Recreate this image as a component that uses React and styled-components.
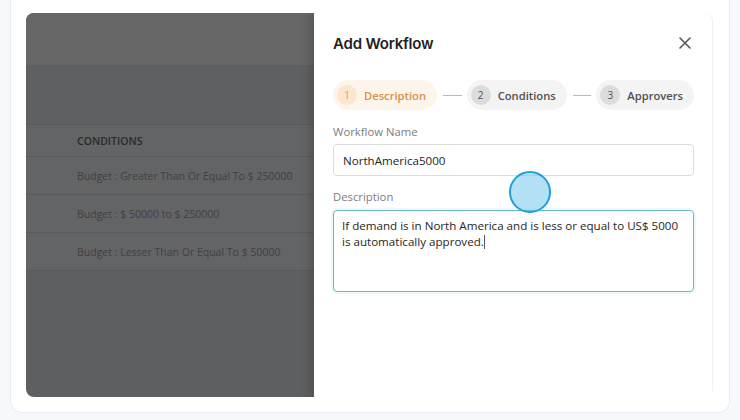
import React from 'react';
import styled, { createGlobalStyle } from 'styled-components';

const GlobalStyle = createGlobalStyle`
    html, body {
        margin: 0;
        padding: 0;
        background: #f6f8fb;
        font-family: "Open Sans", "Noto Sans", sans-serif;
    }
`

const steps = [
    { n: 1, label: 'Description', active: true },
    { n: 2, label: 'Conditions' },
    { n: 3, label: 'Approvers' },
];

const rows = [
    'Budget : Greater Than Or Equal To $ 250000',
    'Budget : $ 50000 to $ 250000',
    'Budget : Lesser Than Or Equal To $ 50000',
];

const App = () => {
    return (
        <>
            <GlobalStyle />
            <Page>
                <Card>
                    <Frame>
                        <Dimmed>
                            <TopBand />
                            <MidBand />
                            <HeadRow>CONDITIONS</HeadRow>
                            {rows.map((r) => (
                                <Row key={r}>{r}</Row>
                            ))}
                        </Dimmed>

                        <Drawer>
                            <Header>
                                <Title>Add Workflow</Title>
                                <Close>
                                    <svg width="14" height="14" viewBox="0 0 14 14">
                                        <path d="M2 2 L12 12 M12 2 L2 12" stroke="#555" strokeWidth="1.6" strokeLinecap="round" />
                                    </svg>
                                </Close>
                            </Header>

                            <Stepper>
                                {steps.map((s, i) => (
                                    <React.Fragment key={s.n}>
                                        {i > 0 && <Dash />}
                                        <Step $active={s.active}>
                                            <StepNum $active={s.active}>{s.n}</StepNum>
                                            {s.label}
                                        </Step>
                                    </React.Fragment>
                                ))}
                            </Stepper>

                            <Label>Workflow Name</Label>
                            <Input>NorthAmerica5000</Input>

                            <Label $top={13}>Description</Label>
                            <TextArea>
                                If demand is in North America and is less or equal to US$ 5000 is automatically approved.<Caret />
                            </TextArea>

                            <Pointer />
                        </Drawer>
                    </Frame>
                </Card>
            </Page>
        </>
    );
}

const Page = styled.div`
    width: 740px;
    height: 420px;
    padding: 0 10px 7px 10px;
    box-sizing: border-box;
    overflow: hidden;
`

const Card = styled.div`
    height: 413px;
    box-sizing: border-box;
    background: #fff;
    border: 1px solid #e9ecf0;
    border-top: none;
    border-radius: 0 0 12px 12px;
    padding: 13px 16px 15px 15px;
`

const Frame = styled.div`
    display: flex;
    height: 384px;
    border-radius: 8px;
    overflow: hidden;
`

const Dimmed = styled.div`
    width: 288px;
    flex-shrink: 0;
    background: #5e5f61;
    display: flex;
    flex-direction: column;
`

const TopBand = styled.div`
    height: 52px;
    background: #676767;
`

const MidBand = styled.div`
    height: 59px;
    background: #5f6062;
    border-bottom: 1px solid #595a5c;
`

const HeadRow = styled.div`
    height: 31px;
    display: flex;
    align-items: center;
    padding-left: 51px;
    background: #636466;
    border-bottom: 1px solid #595a5c;
    color: #2a2a2c;
    font-size: 10.5px;
    font-weight: 600;
`

const Row = styled.div`
    height: 37px;
    display: flex;
    align-items: center;
    padding-left: 51px;
    background: #636466;
    border-bottom: 1px solid #595a5c;
    color: #404143;
    font-size: 10.5px;
`

const Drawer = styled.div`
    position: relative;
    flex: 1;
    min-width: 0;
    background: #fff;
    border-radius: 0 8px 0 0;
    border-right: 1px solid #f0f1f3;
    box-shadow: -4px 0 10px rgba(0, 0, 0, 0.18);
    padding: 19px 18px 0 19px;
`

const Header = styled.div`
    display: flex;
    align-items: center;
    justify-content: space-between;
    height: 22px;
`

const Title = styled.h2`
    margin: 0;
    font-family: Inter, "Noto Sans", sans-serif;
    font-size: 15px;
    font-weight: 600;
    letter-spacing: -0.2px;
    color: #1f1f1f;
`

const Close = styled.div`
    display: flex;
    margin-right: 2px;
`

const Stepper = styled.div`
    display: flex;
    align-items: center;
    margin-top: 26px;
`

const Step = styled.div`
    display: flex;
    align-items: center;
    gap: 7px;
    height: 30px;
    padding: 0 11px 0 4px;
    border-radius: 15px;
    background: ${({ $active }) => ($active ? '#fdf4eb' : '#f4f4f5')};
    color: ${({ $active }) => ($active ? '#d9914d' : '#505050')};
    font-size: 11.2px;
    font-weight: 600;
    white-space: nowrap;
`

const StepNum = styled.span`
    width: 20px;
    height: 20px;
    border-radius: 50%;
    display: flex;
    align-items: center;
    justify-content: center;
    background: ${({ $active }) => ($active ? '#fde6d0' : '#dcdcdd')};
    color: ${({ $active }) => ($active ? '#e49a55' : '#555')};
    font-size: 10px;
    font-weight: 500;
`

const Dash = styled.span`
    width: 19px;
    height: 1px;
    margin: 0 5px 0 6px;
    background: #b9b9b9;
`

const Label = styled.div`
    margin-top: ${({ $top }) => $top || 14}px;
    font-size: 11.3px;
    color: #7d7d7d;
    line-height: 16px;
`

const Input = styled.div`
    margin-top: 4px;
    height: 32px;
    box-sizing: border-box;
    border: 1px solid #dedede;
    border-radius: 4px;
    padding: 0 9px;
    display: flex;
    align-items: center;
    font-size: 11.6px;
    font-weight: 500;
    color: #262626;
`

const TextArea = styled.div`
    margin-top: 5px;
    height: 82px;
    box-sizing: border-box;
    border: 1px solid #6bb9bd;
    border-radius: 4px;
    box-shadow: 0 0 0 2px rgba(107, 205, 210, 0.12);
    padding: 7px 12px 0 8px;
    font-size: 11.6px;
    font-weight: 500;
    line-height: 16px;
    color: #262626;
`

const Caret = styled.span`
    display: inline-block;
    width: 1px;
    height: 14px;
    vertical-align: -3px;
    background: #5a5a5a;
`

const Pointer = styled.div`
    position: absolute;
    left: 195px;
    top: 158px;
    width: 38px;
    height: 38px;
    border-radius: 50%;
    background: rgba(120, 200, 240, 0.55);
    border: 2px solid #1ba0dc;
`

export default App;
